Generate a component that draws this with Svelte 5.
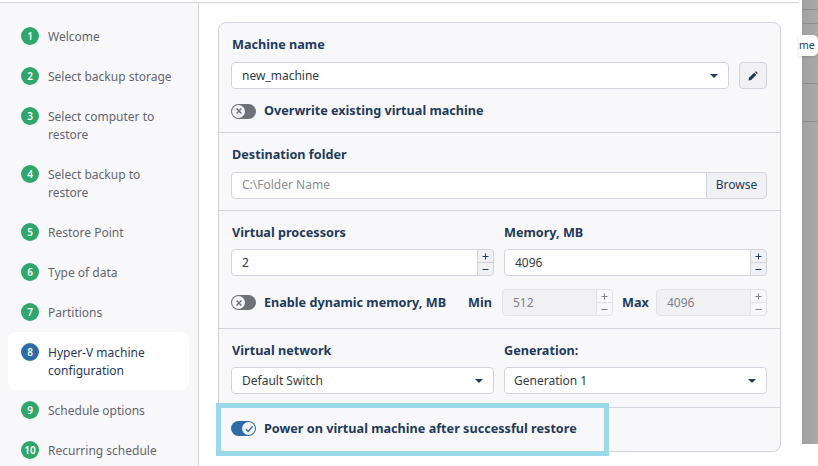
<script>
    const steps = [
        { n: 1, label: 'Welcome' },
        { n: 2, label: 'Select backup storage' },
        { n: 3, label: 'Select computer to restore' },
        { n: 4, label: 'Select backup to restore' },
        { n: 5, label: 'Restore Point' },
        { n: 6, label: 'Type of data' },
        { n: 7, label: 'Partitions' },
        { n: 8, label: 'Hyper-V machine configuration', active: true },
        { n: 9, label: 'Schedule options' },
        { n: 10, label: 'Recurring schedule' }
    ];
</script>

{#snippet spinner()}
    <div class="spin">
        <span>
            <svg width="7" height="7" viewBox="0 0 7 7"><path d="M0.5 3.5 H6.5 M3.5 0.5 V6.5" stroke="currentColor" fill="none" /></svg>
        </span>
        <span>
            <svg width="7" height="7" viewBox="0 0 7 7"><path d="M0.5 3.5 H6.5" stroke="currentColor" fill="none" /></svg>
        </span>
    </div>
{/snippet}

{#snippet offSwitch()}
    <span class="switch">
        <span class="knob">
            <svg width="10" height="10" viewBox="0 0 10 10"><path d="M2.6 2.6 L7.4 7.4 M7.4 2.6 L2.6 7.4" stroke="#6f7079" stroke-width="1.4" fill="none" /></svg>
        </span>
    </span>
{/snippet}

<div class="page">
    <div class="modal">
        <aside class="sidebar">
            {#each steps as step}
                <div class="step" class:active={step.active}>
                    <span class="num">{step.n}</span>
                    <span class="step-label">{step.label}</span>
                </div>
            {/each}
        </aside>

        <main class="content">
            <div class="card">
                <section>
                    <div class="title">Machine name</div>
                    <div class="row">
                        <div class="select grow"><span>new_machine</span><i class="caret"></i></div>
                        <button class="icon-btn" aria-label="Edit">
                            <svg width="10" height="10" viewBox="0 0 12 12">
                                <path d="M0.6 11.4 L1.2 8.2 L7.4 2 L10 4.6 L3.8 10.8 Z" fill="#1f3a5c" />
                                <path d="M8.2 1.2 L9 0.6 Q9.6 0.2 10.2 0.8 L11.2 1.8 Q11.8 2.4 11.4 3 L10.8 3.8 Z" fill="#1f3a5c" />
                            </svg>
                        </button>
                    </div>
                    <div class="switch-row">
                        {@render offSwitch()}
                        <span class="title inline">Overwrite existing virtual machine</span>
                    </div>
                </section>

                <section>
                    <div class="title">Destination folder</div>
                    <div class="input-group">
                        <div class="input placeholder grow">C:\Folder Name</div>
                        <button class="browse">Browse</button>
                    </div>
                </section>

                <section>
                    <div class="cols">
                        <div>
                            <div class="title">Virtual processors</div>
                            <div class="number">
                                <div class="num-value">2</div>
                                {@render spinner()}
                            </div>
                        </div>
                        <div>
                            <div class="title">Memory, MB</div>
                            <div class="number">
                                <div class="num-value">4096</div>
                                {@render spinner()}
                            </div>
                        </div>
                    </div>
                    <div class="switch-row memory">
                        {@render offSwitch()}
                        <span class="title inline">Enable dynamic memory, MB</span>
                        <div class="limits">
                            <span class="title inline">Min</span>
                            <div class="number disabled">
                                <div class="num-value">512</div>
                                {@render spinner()}
                            </div>
                            <span class="title inline">Max</span>
                            <div class="number disabled">
                                <div class="num-value">4096</div>
                                {@render spinner()}
                            </div>
                        </div>
                    </div>
                </section>

                <section>
                    <div class="cols">
                        <div>
                            <div class="title">Virtual network</div>
                            <div class="select spaced"><span>Default Switch</span><i class="caret"></i></div>
                        </div>
                        <div>
                            <div class="title">Generation:</div>
                            <div class="select spaced"><span>Generation 1</span><i class="caret"></i></div>
                        </div>
                    </div>
                </section>

                <section class="last">
                    <div class="switch-row power">
                        <span class="switch on">
                            <span class="knob">
                                <svg width="12" height="12" viewBox="0 0 12 12"><path d="M3 6.2 L5.2 8.4 L9.6 3.2" stroke="#2d6ca5" stroke-width="1.4" fill="none" /></svg>
                            </span>
                        </span>
                        <span class="title inline">Power on virtual machine after successful restore</span>
                    </div>
                </section>
            </div>
            <div class="highlight"></div>
        </main>
    </div>

    <div class="backdrop">
        <div class="bg-line l1"></div>
        <div class="bg-line l2"></div>
        <div class="bg-line l3"></div>
        <div class="bg-line l4"></div>
    </div>
    <div class="tip">me</div>
</div>

<style>
:global(body) {
    margin: 0;
    background: white;
}

.page {
    position: relative;
    display: flex;
    width: 818px;
    height: 466px;
    overflow: hidden;
    font-family: "Noto Sans", "Open Sans", sans-serif;
    font-size: 12px;
    color: #1f3a5c;
}

.modal {
    display: flex;
    width: 802px;
    height: 466px;
    flex-shrink: 0;
    padding-top: 2px;
    box-sizing: border-box;
    background: white;
}

.modal::before {
    content: '';
    position: absolute;
    top: 2px;
    left: 0;
    width: 799px;
    height: 1px;
    background: #d3d3de;
}

.sidebar {
    width: 199px;
    box-sizing: border-box;
    flex-shrink: 0;
    background: #f8f8fb;
    border-right: 1px solid #d3d3de;
    padding: 25px 9px 0 8px;
}

.step {
    display: flex;
    align-items: flex-start;
    gap: 9px;
    padding: 0 13px;
    margin-bottom: 22px;
    font-size: 12px;
    line-height: 18px;
    color: #64656f;
}

.step.active {
    background: white;
    border-radius: 8px;
    padding: 11px 13px;
    margin: -11px 0 11px;
    color: #1f3a5c;
}

.step-label {
    margin: 1px 0 -1px;
}

.num {
    width: 18px;
    height: 18px;
    flex-shrink: 0;
    border-radius: 50%;
    background: #2ea66c;
    color: white;
    font-size: 10px;
    font-weight: 600;
    line-height: 18px;
    text-align: center;
}

.active .num {
    background: #2d6ca5;
}

.content {
    position: relative;
    flex: 1;
    min-width: 0;
    padding: 20px 21px 0 19px;
}

.card {
    height: 430px;
    box-sizing: border-box;
    background: #f8f8fb;
    border: 1px solid #d3d3de;
    border-radius: 8px;
    overflow: hidden;
}

section {
    padding: 12px 13px 0 12px;
    border-bottom: 1px solid #d3d3de;
    box-sizing: border-box;
}

section:nth-child(1) { height: 110px; }
section:nth-child(2) { height: 78px; }
section:nth-child(3) { height: 118px; }
section:nth-child(4) { height: 79px; }
section.last { border-bottom: none; padding-top: 0; }

.title {
    padding: 0 0 2px 1px;
    font-size: 12.65px;
    font-weight: 700;
    line-height: 18px;
    color: #1f3a5c;
}

.cols > div + div .title {
    padding-left: 0;
}

.title.inline {
    padding: 0 0 2px;
    line-height: 16px;
    white-space: nowrap;
}

.row {
    display: flex;
    gap: 10px;
    margin-top: 7px;
}

.grow {
    flex: 1;
}

.select, .input, .num-value {
    box-sizing: border-box;
    height: 27px;
    padding: 0 10px;
    line-height: 25px;
    background: white;
    border: 1px solid #d3d3de;
    border-radius: 4px;
    color: #333a45;
}

.select {
    display: flex;
    justify-content: space-between;
    align-items: center;
}

.cols > div + div .select {
    padding-left: 9px;
}

.spaced {
    margin-top: 6px;
}

.caret {
    width: 0;
    height: 0;
    border-left: 4px solid transparent;
    border-right: 4px solid transparent;
    border-top: 4px solid #1f3a5c;
}

.icon-btn {
    width: 28px;
    height: 27px;
    padding: 0;
    display: flex;
    align-items: center;
    justify-content: center;
    background: #f1f1f5;
    border: 1px solid #d3d3de;
    border-radius: 4px;
}

.switch-row {
    display: flex;
    align-items: center;
    gap: 8px;
    margin-top: 13px;
}

.switch {
    position: relative;
    display: block;
    width: 25px;
    height: 15px;
    flex-shrink: 0;
    border-radius: 8px;
    background: #6f7079;
}

.switch.on {
    background: #2d6ca5;
}

.knob {
    position: absolute;
    top: 1px;
    left: 1px;
    width: 13px;
    height: 13px;
    display: flex;
    align-items: center;
    justify-content: center;
    background: #f4f4f6;
    border-radius: 50%;
}

.on .knob {
    left: 11px;
}

.input-group {
    display: flex;
    margin-top: 7px;
}

.input-group .input {
    line-height: 23px;
    border-radius: 4px 0 0 4px;
}

.placeholder {
    color: #8a8b94;
}

.browse {
    width: 61px;
    height: 27px;
    padding: 0 0 2px;
    margin-left: -1px;
    background: #f1f1f5;
    border: 1px solid #d3d3de;
    border-radius: 0 4px 4px 0;
    font: inherit;
    color: #1f3a5c;
}

.cols {
    display: grid;
    grid-template-columns: 263px 263px;
    gap: 10px;
}

.number {
    display: flex;
    margin-top: 6px;
}

.num-value {
    flex: 1;
    min-width: 0;
    border-radius: 4px 0 0 4px;
}

.spin {
    display: flex;
    flex-direction: column;
    width: 17px;
    height: 27px;
    flex-shrink: 0;
    box-sizing: border-box;
    margin-left: -1px;
    background: #f1f1f5;
    border: 1px solid #d3d3de;
    border-radius: 0 4px 4px 0;
}

.spin span {
    flex: 1;
    display: flex;
    align-items: center;
    justify-content: center;
    color: #1f3a5c;
}

.spin span:first-child {
    border-bottom: 1px solid #d3d3de;
}

.limits {
    display: flex;
    align-items: center;
    gap: 9px;
    margin-left: auto;
}

.limits .number {
    width: 111px;
    margin-top: 0;
}

.limits .title {
    width: 25px;
}

.disabled .num-value {
    background: #f1f1f3;
    border-color: #e2e2e8;
    color: #80818a;
}

.disabled .spin {
    background: #f8f8fb;
    border-color: #e2e2e8;
}

.disabled .spin span {
    color: #80818a;
    border-color: #e2e2e8;
}

.power {
    height: 41px;
    margin-top: 0;
}

.highlight {
    position: absolute;
    left: 17px;
    top: 401px;
    width: 393px;
    height: 53px;
    box-sizing: border-box;
    border: 5px solid #9bd8ea;
}

.backdrop {
    position: relative;
    width: 16px;
    height: 444px;
    flex-shrink: 0;
    background: linear-gradient(to right, #a0a0a0, #aaaaaa);
}

.bg-line {
    position: absolute;
    left: 0;
    right: 0;
    height: 1px;
    background: #8c8c8c;
}

.l1 { top: 9px; }
.l2 { top: 23px; }
.l3 { top: 83px; }
.l4 { top: 121px; }

.tip {
    position: absolute;
    left: 799px;
    top: 35px;
    width: 19px;
    height: 21px;
    box-sizing: border-box;
    background: white;
    border-radius: 0 5px 5px 0;
    box-shadow: 0 1px 3px rgba(0, 0, 0, 0.15);
    font-size: 10.5px;
    line-height: 20px;
    color: #1f3a5c;
}
</style>
